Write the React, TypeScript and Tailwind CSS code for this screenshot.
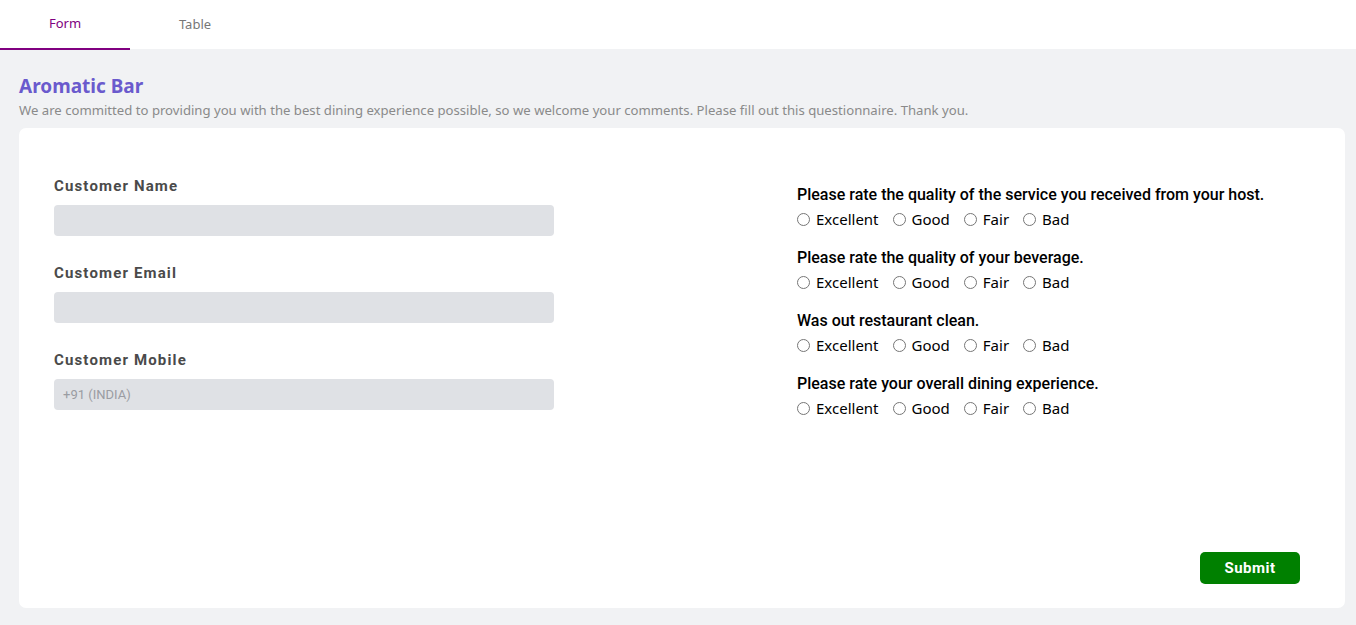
import React from "react";

const questions = [
  "Please rate the quality of the service you received from your host.",
  "Please rate the quality of your beverage.",
  "Was out restaurant clean.",
  "Please rate your overall dining experience.",
];
const options = ["Excellent", "Good", "Fair", "Bad"];

function Field({ label, placeholder }: { label: string; placeholder?: string }) {
  return (
    <div className="flex flex-col">
      <label className="text-[15px] font-bold tracking-[1.15px] text-[#4a4a4a] leading-[20px] [font-family:Roboto,sans-serif]">
        {label}
      </label>
      <input
        className="mt-[9px] w-[500px] h-[31px] rounded-[4px] bg-[#dfe1e5] px-[9px] text-[13px] text-[#333] placeholder:text-[#9a9ca2] outline-none [font-family:Roboto,sans-serif]"
        placeholder={placeholder}
      />
    </div>
  );
}

export default function App() {
  return (
    <div className="min-h-[625px] bg-[#f1f2f4] [font-family:'Noto_Sans',sans-serif]">
      <div className="h-[49px] bg-white flex">
        <div className="w-[130px] h-[50px] flex items-center justify-center border-b-2 border-[#800080] text-[13px] text-[#800080] pb-[1px]">
          Form
        </div>
        <div className="w-[130px] h-[49px] flex items-center justify-center text-[13px] text-[#777]">
          Table
        </div>
      </div>
      <div className="pl-[19px] pr-[11px] pt-[24px] pb-[17px]">
        <h1 className="text-[19px] font-bold leading-[26px] text-[#6a5acd]">Aromatic Bar</h1>
        <p className="mt-[2px] text-[13.15px] leading-[18px] text-[#8a8a8a]">
          We are committed to providing you with the best dining experience possible, so we welcome your comments. Please fill out this questionnaire. Thank you.
        </p>
        <div className="mt-[9px] h-[480px] rounded-[7px] bg-white flex flex-col">
          <div className="flex flex-1">
            <div className="pl-[35px] pt-[48px] w-[778px] flex flex-col gap-[27px]">
              <Field label="Customer Name" />
              <Field label="Customer Email" />
              <Field label="Customer Mobile" placeholder="+91 (INDIA)" />
            </div>
            <div className="pt-[56px] flex flex-col gap-[16px]">
              {questions.map((q, qi) => (
                <div key={qi} className="flex flex-col">
                  <div className="text-[16px] font-medium leading-[22px] text-black [font-family:Roboto,sans-serif]">{q}</div>
                  <div className="flex items-center h-[25px] pt-[2px] text-[15px] text-black">
                    {options.map((o) => (
                      <label key={o} className="flex items-center mr-[14px]">
                        <input type="radio" name={`q${qi}`} className="m-0 mr-[6px] w-[13px] h-[13px]" />
                        <span>{o}</span>
                      </label>
                    ))}
                  </div>
                </div>
              ))}
            </div>
          </div>
          <div className="flex justify-end pr-[45px] pb-[24px]">
            <button className="w-[100px] h-[32px] rounded-[5px] bg-[#008000] text-white text-[15px] font-bold tracking-[0.5px] [font-family:Roboto,sans-serif]">
              Submit
            </button>
          </div>
        </div>
      </div>
    </div>
  );
}
